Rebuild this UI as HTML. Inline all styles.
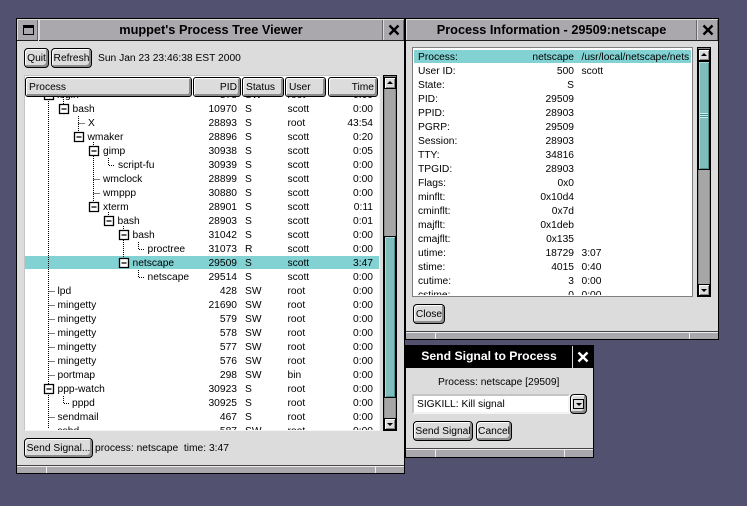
<!DOCTYPE html>
<html><head><meta charset="utf-8"><style>
html,body{margin:0;padding:0}
body{width:747px;height:506px;background:#525270;overflow:hidden;position:relative;font:10.25px/14px "Liberation Sans",sans-serif;color:#000}
div,span{position:absolute;white-space:nowrap;box-sizing:border-box}
.win{background:#dcdcdc;border:1px solid #000}
.tb{background:#aaa8ac;border-bottom:1px solid #222;box-shadow:inset 1px 1px 0 #dcdcdc,inset -1px 0 0 #666;font:bold 12.75px/21px "Liberation Sans",sans-serif;text-align:center;color:#000}
.bar{background:#aaa8ac;border-top:1px solid #444;box-shadow:inset 0 1px 0 #eee}
.sep{background:#f0f0f0;width:1px;top:1px;bottom:0}
.b{background:#dcdcdc;border:1px solid #000;border-radius:4px;box-shadow:inset 1px 1px 0 #fff,inset -2px -2px 0 #8c8c8c;text-align:center;height:20px;line-height:19px}
.h{background:#dcdcdc;border:1px solid #000;border-radius:3px;box-shadow:inset 1px 1px 0 #fff,inset -2px -2px 0 #8c8c8c;height:20px;line-height:19px;top:77px;padding:0 3px}
.r{left:0;right:0;height:14px;line-height:14px}
.p{right:auto;text-align:right}
#rows .p{left:180px;width:57px}
#rows .s{left:245px}
#rows .u{left:287.5px}
#rows .t{left:330px;width:43px;text-align:right}
#info .l{left:418px}
#info .v{left:500px;width:74px;text-align:right}
#info .x{left:581.5px}
.sb{background:#a6a6a6;border:1px solid #000;outline:1px solid #888;outline-offset:-2px;width:14px}
.ar{background:#dcdcdc;border:1px solid #000;box-shadow:inset 1px 1px 0 #fff,inset -1px -1px 0 #888;width:12px;height:12px;left:0}
.thumb{background:#7fbcbc;border:1px solid #000;box-shadow:inset 1px 1px 0 #a6dcdc,inset -1px -1px 0 #4f8c8c;width:12px;left:0}
</style></head><body>

<!-- Process tree window -->
<div class="win" style="left:16px;top:18px;width:389px;height:456px"></div>
<div class="tb" style="left:17px;top:19px;width:21px;height:22px"></div>
<div style="left:23px;top:25px;width:11px;height:10px;border:1px solid #000;border-top-width:3px"></div>
<div class="tb" style="left:39px;top:19px;width:344px;height:22px">muppet's Process Tree Viewer</div>
<div class="tb" style="left:383px;top:19px;width:21px;height:22px"></div>
<svg style="position:absolute;left:388px;top:24px" width="12" height="12"><path d="M1.5 1.5L10.5 10.5M10.5 1.5L1.5 10.5" stroke="#000" stroke-width="2.4"/></svg>

<div class="b" style="left:24px;top:48px;width:25px">Quit</div>
<div class="b" style="left:51px;top:48px;width:41px">Refresh</div>
<span style="left:98px;top:52px">Sun Jan 23 23:46:38 EST 2000</span>

<div style="left:24px;top:75px;width:356px;height:356px;background:#fff;border:1px solid;border-color:#c4c4c4 #f4f4f4 #f4f4f4 #c4c4c4"></div>
<div class="h" style="left:25px;width:167px">Process</div>
<div class="h" style="left:193px;width:48px;text-align:right">PID</div>
<div class="h" style="left:242px;width:42px">Status</div>
<div class="h" style="left:285px;width:41px">User</div>
<div class="h" style="left:328px;width:50px;text-align:right">Time</div>

<div style="left:25px;top:97px;width:354px;height:333px;overflow:hidden">
<div style="left:0;top:159px;width:354px;height:13px;background:#82d2d4"></div>
<svg style="position:absolute;left:-25px;top:-97px" width="380" height="440">
<g fill="none" stroke="#000" stroke-dasharray="1 1" shape-rendering="crispEdges">
<path d="M48.5 97V429M63.5 97V105M78.5 116V133M78.5 123.5H85M93.5 142V147M93.5 156V203M108.5 158V165.5H115M93.5 179.5H100M93.5 193.5H100M108.5 212V217M123.5 226V231M123.5 240V259M138.5 242V249.5H145M138.5 270V277.5H145M48.5 291.5H55M48.5 305.5H55M48.5 319.5H55M48.5 333.5H55M48.5 347.5H55M48.5 361.5H55M48.5 375.5H55M48.5 417.5H55M63.5 396V403.5H70"/>
</g>
<g fill="#fff" stroke="#000" stroke-width="1.3">
<path d="M44.5 90.5h9v9h-9zM59.5 104.5h9v9h-9zM74.5 132.5h9v9h-9zM89.5 146.5h9v9h-9zM89.5 202.5h9v9h-9zM104.5 216.5h9v9h-9zM119.5 230.5h9v9h-9zM119.5 258.5h9v9h-9zM44.5 384.5h9v9h-9z"/>
<path d="M46.5 95h5M61.5 109h5M76.5 137h5M91.5 151h5M91.5 207h5M106.5 221h5M121.5 235h5M121.5 263h5M46.5 389h5"/>
</g>
</svg>
<div id="rows" style="left:-25px;top:-96px;width:380px;height:440px">
<div class="r" style="top:88px"><span style="left:57px">login</span><span class="p">878</span><span class="s">SW</span><span class="u">root</span><span class="t">0:00</span></div>
<div class="r" style="top:102px"><span style="left:72.5px">bash</span><span class="p">10970</span><span class="s">S</span><span class="u">scott</span><span class="t">0:00</span></div>
<div class="r" style="top:116px"><span style="left:88px">X</span><span class="p">28893</span><span class="s">S</span><span class="u">root</span><span class="t">43:54</span></div>
<div class="r" style="top:130px"><span style="left:87.5px">wmaker</span><span class="p">28896</span><span class="s">S</span><span class="u">scott</span><span class="t">0:20</span></div>
<div class="r" style="top:144px"><span style="left:103px">gimp</span><span class="p">30938</span><span class="s">S</span><span class="u">scott</span><span class="t">0:05</span></div>
<div class="r" style="top:158px"><span style="left:118px">script-fu</span><span class="p">30939</span><span class="s">S</span><span class="u">scott</span><span class="t">0:00</span></div>
<div class="r" style="top:172px"><span style="left:103px">wmclock</span><span class="p">28899</span><span class="s">S</span><span class="u">scott</span><span class="t">0:00</span></div>
<div class="r" style="top:186px"><span style="left:103px">wmppp</span><span class="p">30880</span><span class="s">S</span><span class="u">scott</span><span class="t">0:00</span></div>
<div class="r" style="top:200px"><span style="left:103px">xterm</span><span class="p">28901</span><span class="s">S</span><span class="u">scott</span><span class="t">0:11</span></div>
<div class="r" style="top:214px"><span style="left:117.5px">bash</span><span class="p">28903</span><span class="s">S</span><span class="u">scott</span><span class="t">0:01</span></div>
<div class="r" style="top:228px"><span style="left:132.5px">bash</span><span class="p">31042</span><span class="s">S</span><span class="u">scott</span><span class="t">0:00</span></div>
<div class="r" style="top:242px"><span style="left:147.5px">proctree</span><span class="p">31073</span><span class="s">R</span><span class="u">scott</span><span class="t">0:00</span></div>
<div class="r" style="top:256px"><span style="left:132.5px">netscape</span><span class="p">29509</span><span class="s">S</span><span class="u">scott</span><span class="t">3:47</span></div>
<div class="r" style="top:270px"><span style="left:147.5px">netscape</span><span class="p">29514</span><span class="s">S</span><span class="u">scott</span><span class="t">0:00</span></div>
<div class="r" style="top:284px"><span style="left:57.5px">lpd</span><span class="p">428</span><span class="s">SW</span><span class="u">root</span><span class="t">0:00</span></div>
<div class="r" style="top:298px"><span style="left:57.5px">mingetty</span><span class="p">21690</span><span class="s">SW</span><span class="u">root</span><span class="t">0:00</span></div>
<div class="r" style="top:312px"><span style="left:57.5px">mingetty</span><span class="p">579</span><span class="s">SW</span><span class="u">root</span><span class="t">0:00</span></div>
<div class="r" style="top:326px"><span style="left:57.5px">mingetty</span><span class="p">578</span><span class="s">SW</span><span class="u">root</span><span class="t">0:00</span></div>
<div class="r" style="top:340px"><span style="left:57.5px">mingetty</span><span class="p">577</span><span class="s">SW</span><span class="u">root</span><span class="t">0:00</span></div>
<div class="r" style="top:354px"><span style="left:57.5px">mingetty</span><span class="p">576</span><span class="s">SW</span><span class="u">root</span><span class="t">0:00</span></div>
<div class="r" style="top:368px"><span style="left:57.5px">portmap</span><span class="p">298</span><span class="s">SW</span><span class="u">bin</span><span class="t">0:00</span></div>
<div class="r" style="top:382px"><span style="left:57.5px">ppp-watch</span><span class="p">30923</span><span class="s">S</span><span class="u">root</span><span class="t">0:00</span></div>
<div class="r" style="top:396px"><span style="left:72px">pppd</span><span class="p">30925</span><span class="s">S</span><span class="u">root</span><span class="t">0:00</span></div>
<div class="r" style="top:410px"><span style="left:57.5px">sendmail</span><span class="p">467</span><span class="s">S</span><span class="u">root</span><span class="t">0:00</span></div>
<div class="r" style="top:424px"><span style="left:57.5px">sshd</span><span class="p">587</span><span class="s">SW</span><span class="u">root</span><span class="t">0:00</span></div>
</div>
</div>

<div class="sb" style="left:383px;top:75px;height:356px">
<div class="ar" style="top:1px;left:0"><svg style="position:absolute;left:2px;top:2px" width="6" height="6"><path d="M3 1L6 4H0z" fill="#000"/></svg></div>
<div class="thumb" style="top:160px;height:162px"></div>
<div class="ar" style="bottom:0"><svg style="position:absolute;left:2px;top:2px" width="6" height="6"><path d="M0 2H6L3 5z" fill="#000"/></svg></div>
</div>

<div class="b" style="left:24px;top:438px;width:69px">Send Signal...</div>
<span style="left:95px;top:442px">process: netscape&nbsp; time: 3:47</span>

<div class="bar" style="left:17px;top:465px;width:387px;height:8px"><div class="sep" style="left:29px"></div><div class="sep" style="left:358px"></div></div>

<!-- Process info window -->
<div class="win" style="left:405px;top:18px;width:314px;height:322px"></div>
<div class="tb" style="left:406px;top:19px;width:291px;height:22px">Process Information - 29509:netscape</div>
<div class="tb" style="left:697px;top:19px;width:21px;height:22px"></div>
<svg style="position:absolute;left:702px;top:24px" width="12" height="12"><path d="M1.5 1.5L10.5 10.5M10.5 1.5L1.5 10.5" stroke="#000" stroke-width="2.4"/></svg>

<div style="left:412px;top:47px;width:281px;height:250px;background:#fff;border:1px solid #808080"></div>
<div style="left:414px;top:50px;width:277px;height:13px;background:#82d2d4"></div>
<div id="info" style="left:0;top:1px;width:747px;height:294px;overflow:hidden">
<span class="l" style="top:50px">Process:</span><span class="v" style="top:50px">netscape</span><span class="x" style="top:50px">/usr/local/netscape/nets</span>
<span class="l" style="top:64px">User ID:</span><span class="v" style="top:64px">500</span><span class="x" style="top:64px">scott</span>
<span class="l" style="top:78px">State:</span><span class="v" style="top:78px">S</span>
<span class="l" style="top:92px">PID:</span><span class="v" style="top:92px">29509</span>
<span class="l" style="top:106px">PPID:</span><span class="v" style="top:106px">28903</span>
<span class="l" style="top:120px">PGRP:</span><span class="v" style="top:120px">29509</span>
<span class="l" style="top:134px">Session:</span><span class="v" style="top:134px">28903</span>
<span class="l" style="top:148px">TTY:</span><span class="v" style="top:148px">34816</span>
<span class="l" style="top:162px">TPGID:</span><span class="v" style="top:162px">28903</span>
<span class="l" style="top:176px">Flags:</span><span class="v" style="top:176px">0x0</span>
<span class="l" style="top:190px">minflt:</span><span class="v" style="top:190px">0x10d4</span>
<span class="l" style="top:204px">cminflt:</span><span class="v" style="top:204px">0x7d</span>
<span class="l" style="top:218px">majflt:</span><span class="v" style="top:218px">0x1deb</span>
<span class="l" style="top:232px">cmajflt:</span><span class="v" style="top:232px">0x135</span>
<span class="l" style="top:246px">utime:</span><span class="v" style="top:246px">18729</span><span class="x" style="top:246px">3:07</span>
<span class="l" style="top:260px">stime:</span><span class="v" style="top:260px">4015</span><span class="x" style="top:260px">0:40</span>
<span class="l" style="top:274px">cutime:</span><span class="v" style="top:274px">3</span><span class="x" style="top:274px">0:00</span>
<span class="l" style="top:288px">cstime:</span><span class="v" style="top:288px">0</span><span class="x" style="top:288px">0:00</span>
</div>

<div class="sb" style="left:697px;top:47px;height:250px">
<div class="ar" style="top:1px"><svg style="position:absolute;left:2px;top:2px" width="6" height="6"><path d="M3 1L6 4H0z" fill="#000"/></svg></div>
<div class="thumb" style="top:13px;height:109px"></div>
<div style="left:2px;top:65px;width:8px;height:5px;background:repeating-linear-gradient(#c8eeee 0,#c8eeee 1px,#4f8c8c 1px,#4f8c8c 2px)"></div>
<div class="ar" style="bottom:0"><svg style="position:absolute;left:2px;top:2px" width="6" height="6"><path d="M0 2H6L3 5z" fill="#000"/></svg></div>
</div>

<div class="b" style="left:413px;top:304px;width:32px">Close</div>
<div class="bar" style="left:406px;top:331px;width:312px;height:8px"><div class="sep" style="left:29px"></div><div class="sep" style="left:283px"></div></div>

<!-- Send signal window -->
<div class="win" style="left:405px;top:345px;width:189px;height:113px"></div>
<div class="tb" style="left:406px;top:346px;width:166px;height:22px;background:#000;color:#fff;box-shadow:none;border-bottom:0;font-size:12.2px">Send Signal to Process</div>
<div class="tb" style="left:573px;top:346px;width:20px;height:22px;background:#000;box-shadow:none;border-bottom:0"></div>
<svg style="position:absolute;left:577px;top:351px" width="12" height="12"><path d="M1.5 1.5L10.5 10.5M10.5 1.5L1.5 10.5" stroke="#fff" stroke-width="2.4"/></svg>
<span style="left:438px;top:376px">Process: netscape [29509]</span>
<div style="left:412px;top:394px;width:158px;height:20px;background:#fff;border:2px solid;border-color:#c4c4c4 #f4f4f4 #f4f4f4 #c4c4c4"></div>
<span style="left:417px;top:398px">SIGKILL: Kill signal</span>
<div class="b" style="left:570px;top:394px;width:17px;height:20px"></div>
<div style="left:573px;top:399px;width:11px;height:10px;border:1px solid #000;background:#dcdcdc"></div>
<svg style="position:absolute;left:576px;top:402px" width="6" height="5"><path d="M0 1H6L3 4z" fill="#000"/></svg>
<div class="b" style="left:413px;top:421px;width:60px">Send Signal</div>
<div class="b" style="left:476px;top:421px;width:36px">Cancel</div>
<div class="bar" style="left:406px;top:448px;width:187px;height:9px"><div class="sep" style="left:29px"></div><div class="sep" style="left:158px"></div></div>

</body></html>
